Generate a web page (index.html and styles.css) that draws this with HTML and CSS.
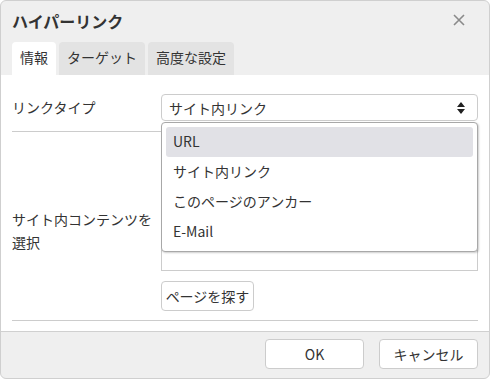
FILE: index.html
```html
<!DOCTYPE html>
<html lang="ja">
<head>
	<meta charset="UTF-8">
	<meta name="viewport" content="width=device-width, initial-scale=1.0">
	<title>ハイパーリンク</title>
	<link rel="stylesheet" href="styles.css">
</head>
<body>
	<div class="dialog">
		<div class="dialog-head">
			<div class="title-row">
				<span class="title">ハイパーリンク</span>
				<span class="close">
					<svg width="12" height="12" viewBox="0 0 12 12"><path d="M1 1L11 11M11 1L1 11" stroke="#8a8a8a" stroke-width="1.6" fill="none"/></svg>
				</span>
			</div>
			<div class="tabs">
				<div class="tab active">情報</div>
				<div class="tab">ターゲット</div>
				<div class="tab">高度な設定</div>
			</div>
		</div>

		<div class="dialog-body">
			<div class="row">
				<div class="label">リンクタイプ</div>
				<div class="field">
					<div class="select">
						<span>サイト内リンク</span>
						<svg width="8" height="12" viewBox="0 0 8 12"><path d="M4 0L8 5H0Z M4 12L8 7H0Z" fill="#222"/></svg>
					</div>
					<div class="dropdown">
						<div class="option selected">URL</div>
						<div class="option">サイト内リンク</div>
						<div class="option">このページのアンカー</div>
						<div class="option">E-Mail</div>
					</div>
				</div>
			</div>
			<div class="row">
				<div class="label lower">サイト内コンテンツを<br>選択</div>
				<div class="field">
					<div class="preview"></div>
					<button class="btn small">ページを探す</button>
				</div>
			</div>
		</div>

		<div class="dialog-foot">
			<button class="btn">OK</button>
			<button class="btn">キャンセル</button>
		</div>
	</div>
</body>
</html>
```

FILE: styles.css
```css
body {
	margin: 0;
	font-family: "Noto Sans CJK JP", "Noto Sans", sans-serif;
	color: #333;
	font-size: 14px;
}

.dialog {
	width: 490px;
	height: 379px;
	box-sizing: border-box;
	border: 1px solid #cfcfcf;
	border-radius: 6px;
	background-color: #efefef;
	overflow: hidden;
	display: flex;
	flex-direction: column;
}

.dialog-head {
	padding: 0 11px;
}

.title-row {
	height: 41px;
	display: flex;
	align-items: center;
	justify-content: space-between;
}

.title {
	font-size: 16px;
	font-weight: bold;
	color: #333;
	margin-top: -2px;
}

.close {
	display: flex;
	margin-right: 13px;
	margin-top: -4px;
}

.tabs {
	display: flex;
	gap: 3px;
}

.tab {
	height: 33px;
	line-height: 31px;
	padding: 0 8px;
	background-color: #e3e3e3;
	border-radius: 4px 4px 0 0;
}

.tab.active {
	background-color: #fff;
}

.dialog-body {
	background-color: #fff;
	padding: 19px 11px 10px;
	border-bottom: 1px solid #d0d0d0;
}

.row {
	display: grid;
	grid-template-columns: 149px 1fr;
	align-items: center;
	padding-bottom: 10px;
	border-bottom: 1px solid #ccc;
}

.row + .row {
	padding-top: 10px;
	padding-bottom: 9px;
}

.label {
	line-height: 23px;
}

.label.lower {
	padding-top: 9px;
}

.field {
	position: relative;
	display: flex;
	flex-direction: column;
	align-items: flex-start;
	gap: 10px;
}

.select {
	width: 100%;
	box-sizing: border-box;
	height: 27px;
	border: 1px solid #ccc;
	border-radius: 4px;
	display: flex;
	align-items: center;
	justify-content: space-between;
	padding: 0 12px 0 7px;
}

.dropdown {
	position: absolute;
	top: 28px;
	left: 0;
	right: 0;
	box-sizing: border-box;
	height: 130px;
	padding: 4px 4px;
	background-color: #fff;
	border: 1px solid #a8a8a8;
	border-radius: 4px;
	box-shadow: 1px 1px 2px rgba(0, 0, 0, 0.2);
	z-index: 2;
}

.option {
	height: 30px;
	line-height: 29px;
	padding: 0 7px;
	border-radius: 3px;
}

.option.selected {
	background-color: #e1e1e6;
}

.preview {
	width: 100%;
	box-sizing: border-box;
	height: 129px;
	border: 1px solid #ccc;
}

.btn {
	font-family: inherit;
	font-size: 14px;
	color: #333;
	background-color: #fff;
	border: 1px solid #ccc;
	border-radius: 4px;
	width: 99px;
	height: 30px;
	padding: 0;
}

.btn.small {
	width: 93px;
}

.dialog-foot {
	flex: 1;
	display: flex;
	justify-content: flex-end;
	align-items: flex-start;
	gap: 15px;
	padding: 7px 11px 0;
}
```
